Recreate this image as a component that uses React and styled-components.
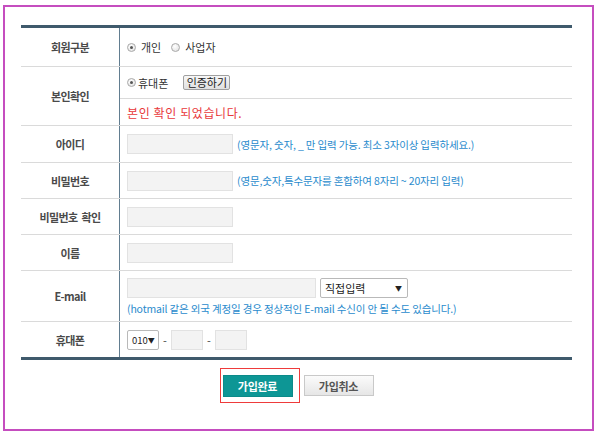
import React from 'react'
import styled, { createGlobalStyle } from 'styled-components'

const GlobalStyle = createGlobalStyle`
  html, body {
    margin: 0;
    padding: 0;
    background: #fff;
  }
  body {
    font-family: 'Noto Sans CJK KR', 'Noto Sans', sans-serif;
    color: #333;
  }
  * { box-sizing: border-box; }
`

const Frame = styled.div`
  width: 591px;
  height: 426px;
  margin: 5px 0 0 3px;
  border: 2px solid #c54dbf;
  padding: 18px 0 0 16px;
`

const FormTable = styled.div`
  width: 551px;
  border-top: 3px solid #3f5a6c;
  border-bottom: 3px solid #3f5a6c;
`

const Row = styled.div`
  display: grid;
  grid-template-columns: 99px 1fr;
  height: ${p => p.$h}px;
  border-bottom: 1px solid #dadada;
  &:last-child { border-bottom: none; }
`

const Label = styled.div`
  display: flex;
  align-items: center;
  justify-content: center;
  border-right: 1px solid #627d90;
  font-size: 11px;
  font-weight: bold;
  color: #4a4a4a;
  letter-spacing: -0.6px;
  word-spacing: 2px;
`

const Cell = styled.div`
  display: flex;
  flex-direction: ${p => (p.$col ? 'column' : 'row')};
  align-items: ${p => (p.$col ? 'flex-start' : 'center')};
  padding: ${p => (p.$col ? '7px 0 0 7px' : '0 0 0 7px')};
  gap: ${p => (p.$col ? '3px' : '0')};
`

const SplitCell = styled.div`
  display: grid;
  grid-template-rows: 32px 26px;
`

const SubRow = styled.div`
  display: flex;
  align-items: center;
  padding-left: 7px;
  border-bottom: ${p => (p.$line ? '1px solid #dadada' : 'none')};
`

const Line = styled.div`
  display: flex;
  align-items: center;
`

const RadioWrap = styled.label`
  display: inline-flex;
  align-items: center;
  gap: ${p => p.$gap || 5}px;
  margin-right: ${p => p.$mr || 0}px;
  font-size: 11px;
  color: #333;
`

const RadioDot = styled.span`
  display: inline-block;
  position: relative;
  width: 9px;
  height: 9px;
  border-radius: 50%;
  border: 1px solid #a9a9a9;
  background: radial-gradient(circle at 40% 35%, #ffffff 0%, #e4e4e4 80%);
  &::after {
    content: '';
    display: ${p => (p.$checked ? 'block' : 'none')};
    position: absolute;
    left: 2px;
    top: 2px;
    width: 3px;
    height: 3px;
    border-radius: 50%;
    background: #555;
  }
`

const SmallButton = styled.button`
  width: 47px;
  height: 15px;
  margin-left: 15px;
  padding: 0;
  border: 1px solid #a0a0a0;
  border-radius: 2px;
  background: linear-gradient(#f7f7f7, #e0e0e0);
  font-family: inherit;
  font-size: 11px;
  line-height: 13px;
  color: #222;
`

const Notice = styled.span`
  font-size: 12px;
  color: #e8383a;
  letter-spacing: 0.6px;
`

const TextInput = styled.input`
  width: ${p => p.$w}px;
  height: 20px;
  margin: 0;
  border: 1px solid #e2e2e2;
  background: #f3f3f3;
  padding: 0 4px;
  font-family: inherit;
  font-size: 11px;
`

const Hint = styled.span`
  margin-left: ${p => p.$ml || 0}px;
  font-size: 10.5px;
  color: #2a8bcd;
  letter-spacing: -0.15px;
  white-space: nowrap;
`

const SelectBox = styled.div`
  display: flex;
  align-items: center;
  justify-content: space-between;
  width: ${p => p.$w}px;
  height: 20px;
  margin-left: ${p => p.$ml || 0}px;
  padding: 0 ${p => (p.$small ? 4 : 5)}px 0 4px;
  border: 1px solid #b9b9b9;
  border-radius: 2px;
  background: #fff;
  font-size: ${p => (p.$small ? 9.5 : 11)}px;
  color: #222;
`

const Arrow = styled.span`
  font-size: 7px;
  color: #222;
`

const Dash = styled.span`
  width: 12px;
  text-align: center;
  font-size: 11px;
  color: #444;
`

const Actions = styled.div`
  display: flex;
  justify-content: center;
  align-items: center;
  gap: 4px;
  width: 551px;
  margin-top: 8px;
`

const Highlight = styled.div`
  display: flex;
  padding: 6px 6px 5px 2px;
  border: 1px solid #ee3b3b;
`

const ActionButton = styled.button`
  width: 70px;
  height: ${p => (p.$primary ? 22 : 21)}px;
  padding: 0;
  border: 1px solid ${p => (p.$primary ? '#0b8a89' : '#c9c9c9')};
  background: ${p => (p.$primary ? '#0d9695' : 'linear-gradient(#fbfbfb, #e6e6e6)')};
  color: ${p => (p.$primary ? '#fff' : '#555')};
  font-family: inherit;
  font-size: 11px;
  font-weight: bold;
  letter-spacing: -0.3px;
`

const Radio = ({ checked, children, gap, mr }) => (
  <RadioWrap $gap={gap} $mr={mr}>
    <RadioDot $checked={checked} />
    {children}
  </RadioWrap>
)

export default function App() {
  return (
    <>
      <GlobalStyle />
      <Frame>
        <FormTable>
          <Row $h={39}>
            <Label>회원구분</Label>
            <Cell>
              <Radio checked mr={10}>개인</Radio>
              <Radio>사업자</Radio>
            </Cell>
          </Row>
          <Row $h={59}>
            <Label>본인확인</Label>
            <SplitCell>
              <SubRow $line>
                <Radio checked gap={2}>휴대폰</Radio>
                <SmallButton type="button">인증하기</SmallButton>
              </SubRow>
              <SubRow>
                <Notice>본인 확인 되었습니다.</Notice>
              </SubRow>
            </SplitCell>
          </Row>
          <Row $h={37}>
            <Label>아이디</Label>
            <Cell>
              <TextInput $w={106} />
              <Hint $ml={4}>(영문자, 숫자, _ 만 입력 가능. 최소 3자이상 입력하세요.)</Hint>
            </Cell>
          </Row>
          <Row $h={36}>
            <Label>비밀번호</Label>
            <Cell>
              <TextInput $w={106} type="password" />
              <Hint $ml={4}>(영문,숫자,특수문자를 혼합하여 8자리 ~ 20자리 입력)</Hint>
            </Cell>
          </Row>
          <Row $h={36}>
            <Label>비밀번호 확인</Label>
            <Cell>
              <TextInput $w={106} type="password" />
            </Cell>
          </Row>
          <Row $h={36}>
            <Label>이름</Label>
            <Cell>
              <TextInput $w={106} />
            </Cell>
          </Row>
          <Row $h={51}>
            <Label>E-mail</Label>
            <Cell $col>
              <Line>
                <TextInput $w={189} />
                <SelectBox $w={88} $ml={4}>
                  직접입력<Arrow>▼</Arrow>
                </SelectBox>
              </Line>
              <Hint>(hotmail 같은 외국 계정일 경우 정상적인 E-mail 수신이 안 될 수도 있습니다.)</Hint>
            </Cell>
          </Row>
          <Row $h={35}>
            <Label>휴대폰</Label>
            <Cell>
              <SelectBox $w={32} $small>
                010<Arrow>▼</Arrow>
              </SelectBox>
              <Dash>-</Dash>
              <TextInput $w={32} />
              <Dash>-</Dash>
              <TextInput $w={32} />
            </Cell>
          </Row>
        </FormTable>
        <Actions>
          <Highlight>
            <ActionButton type="button" $primary>가입완료</ActionButton>
          </Highlight>
          <ActionButton type="button">가입취소</ActionButton>
        </Actions>
      </Frame>
    </>
  )
}
